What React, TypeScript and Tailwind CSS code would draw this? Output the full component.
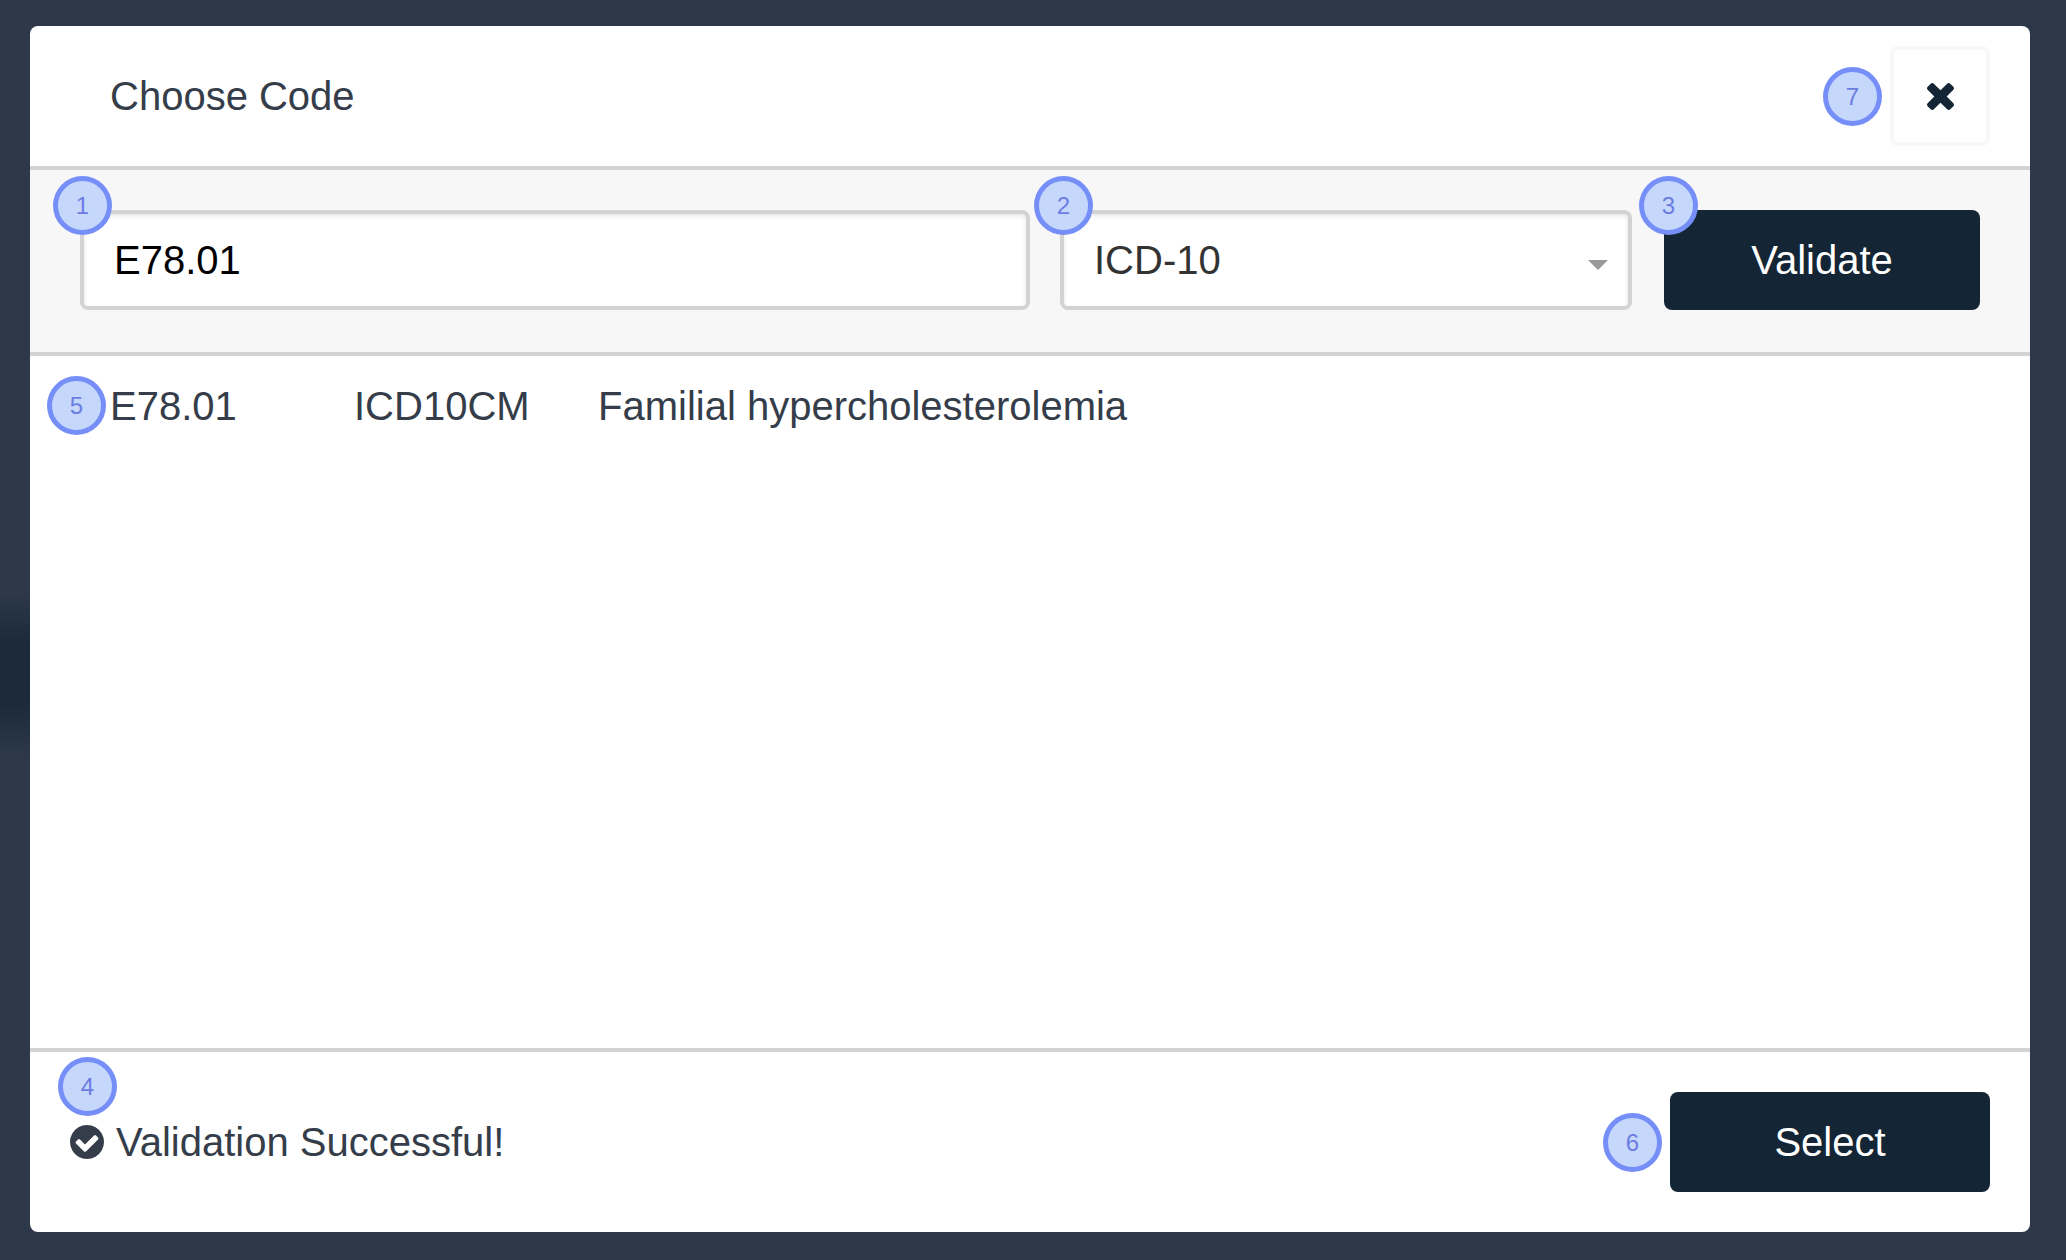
import { useState, type ReactNode } from 'react';

function Marker({ n, className }: { n: number; className: string }) {
  return (
    <span
      className={`absolute z-10 flex size-[59px] items-center justify-center rounded-full border-[5px] border-[#768ff8] bg-[#c5d8fb] text-2xl leading-none text-[#6c7ce3] ${className}`}
    >
      {n}
    </span>
  );
}

function CloseIcon() {
  return (
    <svg viewBox="110 -18 1188 1188" className="size-[27px]" fill="currentColor" aria-hidden="true">
      <path d="M1298 214q0 -40 -28 -68l-136 -136q-28 -28 -68 -28t-68 28l-294 294l-294 -294q-28 -28 -68 -28t-68 28l-136 136q-28 28 -28 68t28 68l294 294l-294 294q-28 28 -28 68t28 68l136 136q28 28 68 28t68 -28l294 -294l294 294q28 28 68 28t68 -28l136 -136q28 -28 28 -68t-28 -68l-294 -294l294 -294q28 -28 28 -68z" />
    </svg>
  );
}

function CheckIcon() {
  return (
    <svg viewBox="0 0 1536 1536" className="size-[34px] shrink-0" fill="currentColor" aria-hidden="true">
      <path d="M1284 606q0-28-18-46l-91-90q-19-19-45-19t-45 19l-408 407-226-226q-19-19-45-19t-45 19l-91 90q-18 18-18 46 0 27 18 45l362 362q19 19 45 19 27 0 46-19l543-543q18-18 18-45zM1536 768q0 209-103 385.5t-279.5 279.5-385.5 103-385.5-103-279.5-279.5-103-385.5 103-385.5 279.5-279.5 385.5-103 385.5 103 279.5 279.5 103 385.5z" />
    </svg>
  );
}

function PrimaryButton({ children, className }: { children: ReactNode; className: string }) {
  return (
    <button type="button" className={`h-[100px] rounded-lg bg-[#142535] text-white ${className}`}>
      {children}
    </button>
  );
}

const field =
  'h-[100px] w-full rounded-lg border-4 border-[#d3d3d3] bg-white px-[30px] shadow-[inset_0_2px_4px_rgba(0,0,0,0.1)] outline-none';

export default function App() {
  const [code, setCode] = useState('E78.01');
  const [system, setSystem] = useState('ICD-10');

  return (
    <div className="flex min-h-screen bg-[#2d3949] bg-[linear-gradient(to_bottom,#2d3949_47%,#1c2a3a_51%,#1c2a3a_56%,#2d3949_60%)] bg-size-[30px_100%] bg-no-repeat pt-[26px] pr-9 pb-7 pl-[30px] font-['Liberation_Sans',Arial,sans-serif] text-[40px] leading-[46px] text-[#343d49]">
      <main role="dialog" aria-labelledby="title" className="flex flex-1 flex-col rounded-lg bg-white">
        <header className="flex items-center justify-between border-b-4 border-[#d3d3d3] py-5 pr-10 pl-20">
          <h1 id="title">Choose Code</h1>
          <div className="relative">
            <Marker n={7} className="top-[21px] -left-[67px]" />
            <button
              type="button"
              aria-label="Close"
              className="flex size-[100px] items-center justify-center rounded-lg border-4 border-[#f7f7f7] bg-white text-[#142535]"
            >
              <CloseIcon />
            </button>
          </div>
        </header>

        <form className="flex border-b-4 border-[#d3d3d3] bg-[#f7f7f7] pt-10 pr-[50px] pb-[42px] pl-[50px]">
          <div className="relative mr-[30px] flex-[950]">
            <Marker n={1} className="-top-[34px] -left-[27px]" />
            <input
              aria-label="Code"
              value={code}
              onChange={(e) => setCode(e.target.value)}
              className={`${field} text-black`}
            />
          </div>
          <div className="relative mr-8 flex-[572]">
            <Marker n={2} className="-top-[34px] -left-[26px]" />
            <select
              aria-label="Code system"
              value={system}
              onChange={(e) => setSystem(e.target.value)}
              className={`${field} appearance-none text-[#333333]`}
            >
              <option>ICD-10</option>
              <option>ICD-9</option>
            </select>
            <svg
              viewBox="0 0 20 10"
              className="pointer-events-none absolute top-[50px] right-6 h-[10px] w-5"
              fill="#999999"
              aria-hidden="true"
            >
              <path d="M0 0h20L10 10z" />
            </svg>
          </div>
          <div className="relative flex-[316]">
            <Marker n={3} className="-top-[34px] -left-[25px]" />
            <PrimaryButton className="w-full">Validate</PrimaryButton>
          </div>
        </form>

        <section className="relative flex-1 px-20 py-[27px]">
          <Marker n={5} className="top-5 left-[17px]" />
          <table>
            <tbody>
              <tr>
                <td className="w-[244px] p-0">E78.01</td>
                <td className="w-[244px] p-0">ICD10CM</td>
                <td className="p-0">Familial hypercholesterolemia</td>
              </tr>
            </tbody>
          </table>
        </section>

        <footer className="flex items-center justify-between border-t-4 border-[#d3d3d3] p-10">
          <p className="relative flex items-center gap-3">
            <Marker n={4} className="-top-[62px] -left-3" />
            <CheckIcon />
            Validation Successful!
          </p>
          <div className="relative">
            <Marker n={6} className="top-[21px] -left-[67px]" />
            <PrimaryButton className="w-[320px]">Select</PrimaryButton>
          </div>
        </footer>
      </main>
    </div>
  );
}
